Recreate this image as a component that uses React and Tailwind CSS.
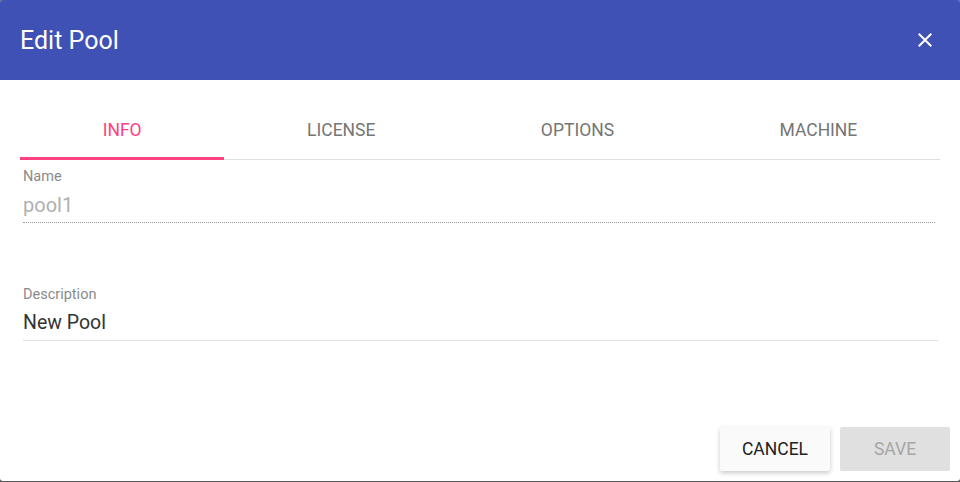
import { useState } from "react";

const TABS = ["INFO", "LICENSE", "OPTIONS", "MACHINE"];

function CloseIcon() {
  return (
    <svg viewBox="0 0 24 24" className="h-6 w-6 fill-white">
      <path d="M19 6.41L17.59 5 12 10.59 6.41 5 5 6.41 10.59 12 5 17.59 6.41 19 12 13.41 17.59 19 19 17.59 13.41 12z" />
    </svg>
  );
}

export default function App() {
  const [tab, setTab] = useState(0);

  return (
    <div
      className="h-[482px] w-[960px] bg-[#5a5a5a]"
      style={{ fontFamily: "Roboto, 'Noto Sans', sans-serif" }}
    >
      <div className="flex h-[481px] flex-col overflow-hidden rounded-[3px] bg-white">
        <div className="flex h-20 shrink-0 items-center justify-between bg-[#3f51b5] pl-5 pr-[23px]">
          <h2 className="text-[25px] font-normal leading-none text-white">
            Edit Pool
          </h2>
          <button className="p-0">
            <CloseIcon />
          </button>
        </div>

        <div className="mx-5 mt-[21px] flex border-b border-[#e0e0e0]">
          {TABS.map((t, i) => (
            <button
              key={t}
              onClick={() => setTab(i)}
              className={
                "relative flex-auto h-[58px] text-[17.5px] " +
                (tab === i ? "text-[#ff4081]" : "text-[#757575]")
              }
            >
              {t}
              {tab === i && (
                <span className="absolute inset-x-0 bottom-[-1px] h-[3px] bg-[#ff4081]" />
              )}
            </button>
          ))}
        </div>

        <div className="ml-[23px] mr-[25px] mt-[9px]">
          <label className="block text-[14.5px] leading-4 text-[#8a8a8a]">
            Name
          </label>
          <div className="mt-[8px] border-b border-dotted border-[#9e9e9e] pb-[5px] text-[20px] leading-6 text-[#b0b0b0]">
            pool1
          </div>
        </div>

        <div className="ml-[23px] mr-[22px] mt-[64px]">
          <label className="block text-[14.5px] leading-4 text-[#8a8a8a]">
            Description
          </label>
          <div className="mt-[8px] border-b border-[#e0e0e0] pb-[5px] text-[19.5px] leading-6 text-[#333]">
            New Pool
          </div>
        </div>

        <div className="mt-auto mb-[10px] mr-[10px] flex justify-end gap-[10px]">
          <button className="h-[44px] w-[110px] rounded-[2px] bg-[#fafafa] text-[17.5px] text-[#222] shadow-[0_2px_5px_rgba(0,0,0,0.22)]">
            CANCEL
          </button>
          <button
            disabled
            className="h-[44px] w-[110px] rounded-[2px] bg-[#e0e0e0] text-[17.5px] text-[#a6a6a6]"
          >
            SAVE
          </button>
        </div>
      </div>
    </div>
  );
}
